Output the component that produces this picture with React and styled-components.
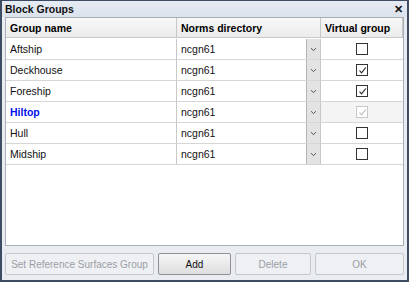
import React from "react";
import styled, { createGlobalStyle } from "styled-components";

const Global = createGlobalStyle`
  html, body { margin: 0; padding: 0; }
  body { width: 409px; height: 282px; overflow: hidden; font-family: "Liberation Sans", Arial, sans-serif; }
`;

const Window = styled.div`
  box-sizing: border-box;
  width: 409px;
  height: 282px;
  border: 1px solid #3d4b63;
  border-left-width: 2px;
  border-right-width: 2px;
  border-bottom-width: 2px;
  background: #e9ecf1;
  display: flex;
  flex-direction: column;
`;

const TitleBar = styled.div`
  height: 16px;
  display: flex;
  align-items: center;
  justify-content: space-between;
  padding: 0 4px 0 3px;
  background: linear-gradient(#e6ebf3, #dbe2ec);
  font-size: 10.5px;
  font-weight: bold;
  color: #111;
`;

const Close = styled.span`
  font-size: 11px;
  font-weight: bold;
  line-height: 1;
`;

const Body = styled.div`
  flex: 1;
  display: flex;
  flex-direction: column;
  padding: 0 3px 4px 3px;
  gap: 7px;
`;

const Grid = styled.div`
  flex: 1;
  background: #fff;
  border: 1px solid #a9afb8;
  display: grid;
  grid-template-columns: 171px 144px 1fr;
  grid-auto-rows: 21px;
  align-content: start;
`;

const Head = styled.div`
  height: 20px;
  box-sizing: border-box;
  display: flex;
  align-items: center;
  padding-left: 4px;
  white-space: nowrap;
  font-size: 10.5px;
  font-weight: bold;
  color: #000;
  background: linear-gradient(#f7f7f7, #ececec);
  border-right: 1px solid #c8c8c8;
  border-bottom: 1px solid #c8c8c8;
  &:last-child { border-right: none; }
`;

const Cell = styled.div`
  box-sizing: border-box;
  display: flex;
  align-items: center;
  padding-left: ${(p) => (p.$pad ? "4px" : "0")};
  justify-content: ${(p) => (p.$center ? "center" : "flex-start")};
  font-size: 10.5px;
  color: ${(p) => (p.$hl ? "#0010ee" : "#111")};
  font-weight: ${(p) => (p.$hl ? "bold" : "normal")};
  background: ${(p) => (p.$shade ? "#f4f4f4" : "#fff")};
  border-right: 1px solid #c8c8c8;
  border-bottom: 1px solid #d6d6d6;
  &:nth-child(3n) { border-right: none; }
`;

const ComboText = styled.span`
  flex: 1;
  padding-left: 4px;
`;

const DropBtn = styled.div`
  width: 13px;
  align-self: stretch;
  background: #e3e3e3;
  border-left: 1px solid #b5b5b5;
  display: flex;
  align-items: center;
  justify-content: center;
`;

const Check = styled.div`
  width: 10px;
  height: 10px;
  border: 1px solid ${(p) => (p.$disabled ? "#c8c8c8" : "#333")};
  background: #fff;
  display: flex;
  align-items: center;
  justify-content: center;
`;

const Buttons = styled.div`
  display: grid;
  grid-template-columns: 149px 73px 76px 1fr;
  gap: 4px;
  height: 22px;
  margin-bottom: 1px;
`;

const Button = styled.button`
  box-sizing: border-box;
  height: 22px;
  padding: 0;
  white-space: nowrap;
  font-family: inherit;
  font-size: 10px;
  border-radius: 2px;
  border: 1px solid ${(p) => (p.disabled ? "#c5c9cf" : "#8d9096")};
  color: ${(p) => (p.disabled ? "#9a9ea4" : "#111")};
  background: ${(p) =>
    p.disabled ? "#eef0f3" : "linear-gradient(#f6f6f6, #dedede)"};
`;

const Chevron = () => (
  <svg width="7" height="5" viewBox="0 0 7 5">
    <path d="M1 1.2 L3.5 3.6 L6 1.2" fill="none" stroke="#555" strokeWidth="1" />
  </svg>
);

const Tick = ({ color }) => (
  <svg width="9" height="9" viewBox="0 0 9 9">
    <path d="M1.5 4.5 L3.5 6.8 L7.8 1.5" fill="none" stroke={color} strokeWidth="1.1" />
  </svg>
);

const rows = [
  { name: "Aftship", checked: false },
  { name: "Deckhouse", checked: true },
  { name: "Foreship", checked: true },
  { name: "Hiltop", checked: true, hl: true },
  { name: "Hull", checked: false },
  { name: "Midship", checked: false },
];

export default function App() {
  return (
    <>
      <Global />
      <Window>
        <TitleBar>
          <span>Block Groups</span>
          <Close>✕</Close>
        </TitleBar>
        <Body>
          <Grid>
            <Head>Group name</Head>
            <Head>Norms directory</Head>
            <Head>Virtual group</Head>
            {rows.map((r) => (
              <React.Fragment key={r.name}>
                <Cell $pad $hl={r.hl}>{r.name}</Cell>
                <Cell>
                  <ComboText>ncgn61</ComboText>
                  <DropBtn>
                    <Chevron />
                  </DropBtn>
                </Cell>
                <Cell $center $shade={r.hl}>
                  <Check $disabled={r.hl}>
                    {r.checked && <Tick color={r.hl ? "#bbb" : "#222"} />}
                  </Check>
                </Cell>
              </React.Fragment>
            ))}
          </Grid>
          <Buttons>
            <Button disabled>Set Reference Surfaces Group</Button>
            <Button>Add</Button>
            <Button disabled>Delete</Button>
            <Button disabled>OK</Button>
          </Buttons>
        </Body>
      </Window>
    </>
  );
}
